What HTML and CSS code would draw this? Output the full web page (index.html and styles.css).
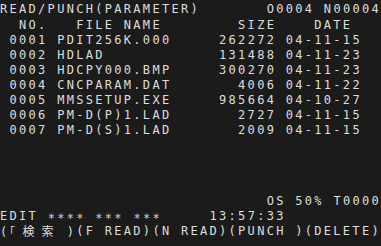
FILE: index.html
```html
<!DOCTYPE html>
<html lang="ja">
<head>
<meta charset="utf-8">
<title>READ/PUNCH (PARAMETER)</title>
<link rel="stylesheet" href="styles.css">
</head>
<body>
<main class="screen">
  <header class="title-row">
    <span>READ/PUNCH(PARAMETER)</span>
    <span>O0004 N00004</span>
  </header>
  <section class="file-table">
    <div class="file-row head">
      <span class="c-no">NO.</span>
      <span class="c-name">FILE NAME</span>
      <span class="c-size">SIZE</span>
      <span class="c-date">DATE</span>
    </div>
    <div class="file-row">
      <span class="c-no">0001</span>
      <span class="c-name">PDIT256K.000</span>
      <span class="c-size">262272</span>
      <span class="c-date">04-11-15</span>
    </div>
    <div class="file-row">
      <span class="c-no">0002</span>
      <span class="c-name">HDLAD</span>
      <span class="c-size">131488</span>
      <span class="c-date">04-11-23</span>
    </div>
    <div class="file-row">
      <span class="c-no">0003</span>
      <span class="c-name">HDCPY000.BMP</span>
      <span class="c-size">300270</span>
      <span class="c-date">04-11-23</span>
    </div>
    <div class="file-row">
      <span class="c-no">0004</span>
      <span class="c-name">CNCPARAM.DAT</span>
      <span class="c-size">4006</span>
      <span class="c-date">04-11-22</span>
    </div>
    <div class="file-row">
      <span class="c-no">0005</span>
      <span class="c-name">MMSSETUP.EXE</span>
      <span class="c-size">985664</span>
      <span class="c-date">04-10-27</span>
    </div>
    <div class="file-row">
      <span class="c-no">0006</span>
      <span class="c-name">PM-D(P)1.LAD</span>
      <span class="c-size">2727</span>
      <span class="c-date">04-11-15</span>
    </div>
    <div class="file-row">
      <span class="c-no">0007</span>
      <span class="c-name">PM-D(S)1.LAD</span>
      <span class="c-size">2009</span>
      <span class="c-date">04-11-15</span>
    </div>
  </section>
  <footer class="status">
    <div class="mode-row"><span>OS 50% T0000</span></div>
    <div class="edit-row">
      <span>EDIT <span class="star">∗∗∗∗</span> <span class="star">∗∗∗</span> <span class="star">∗∗∗</span></span>
      <span class="clock">13:57:33</span>
    </div>
    <nav class="softkeys">
      <span class="key">(<span class="half">｢</span><span class="cjk">検</span><span class="cjk">索</span> )</span>
      <span class="key">(F READ)</span>
      <span class="key">(N READ)</span>
      <span class="key">(PUNCH )</span>
      <span class="key">(DELETE)</span>
    </nav>
  </footer>
</main>
</body>
</html>
```

FILE: styles.css
```css
:root {
  --cw: 9.525px;
  --lh: 14.75px;
}

html,
body {
  margin: 0;
  background: #1b1b1b;
}

body {
  width: 381px;
  height: 246px;
  overflow: hidden;
}

.screen {
  box-sizing: border-box;
  height: 246px;
  display: flex;
  flex-direction: column;
  font-family: "DejaVu Sans Mono", "Liberation Mono", monospace;
  font-size: 12px;
  letter-spacing: 2.3px;
  line-height: var(--lh);
  color: #dedede;
  padding: 2px 0 6.4px;
}

.screen span {
  white-space: pre;
}

.title-row {
  display: flex;
  justify-content: space-between;
  line-height: 15px;
}

.file-row {
  display: grid;
  grid-template-columns:
    calc(var(--cw) * 6)
    calc(var(--cw) * 17)
    calc(var(--cw) * 6)
    calc(var(--cw) * 11);
  line-height: 15px;
}

.file-row.head {
  line-height: 16px;
}

.c-no {
  padding-left: var(--cw);
}

.c-size {
  text-align: right;
}

.c-date {
  padding-left: var(--cw);
}

.head .c-no {
  padding-left: calc(var(--cw) * 2);
}

.head .c-name {
  padding-left: calc(var(--cw) * 2);
}

.head .c-date {
  padding-left: calc(var(--cw) * 4);
}

.status {
  margin-top: auto;
}

.mode-row {
  text-align: right;
}

.edit-row {
  display: grid;
  grid-template-columns: calc(var(--cw) * 22) auto;
}

.softkeys {
  display: grid;
  grid-template-columns: repeat(5, calc(var(--cw) * 8));
}

.half {
  display: inline-block;
  width: var(--cw);
  letter-spacing: 0;
  font-family: "Noto Sans CJK JP", sans-serif;
  font-size: 11px;
}

.cjk {
  display: inline-block;
  width: calc(var(--cw) * 2);
  text-align: center;
  letter-spacing: 0;
  font-family: "Noto Sans CJK JP", sans-serif;
  font-size: 12px;
}
```
